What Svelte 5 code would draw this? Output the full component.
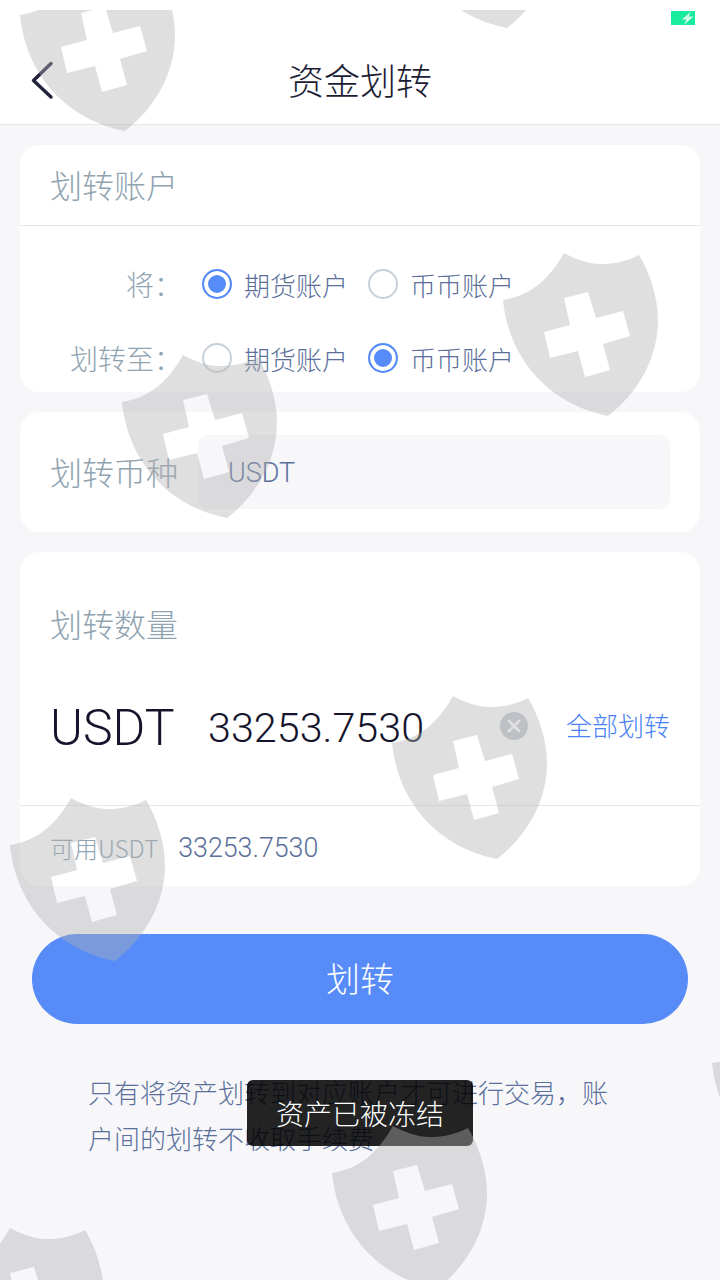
<script>
	const shields = [
		[20, -32],
		[402, -135],
		[503, 253],
		[122, 355],
		[392, 696],
		[10, 798],
		[332, 1126],
		[-51, 1228],
		[712, 1016]
	];
	const shieldPath =
		"M61 0C72 6 85 11 98 11C108 11 120 10 136 2C147 20 155 45 155 67C155 105 135 140 105 163C40 150 5 100 0 47C28 43 47 25 61 0Z" +
		"M61 45L85 39L93 65L120 58L127 83L100 91L107 117L82 124L75 98L47 105L41 79L67 72Z";
</script>

<div class="page">
	<div class="status">
		<svg class="battery" width="24" height="14" viewBox="0 0 24 14">
			<rect width="24" height="14" fill="#19ec9f" />
			<path d="M20 0.5L11 8.5H15.5L13 14L22.5 5.5H17.5Z" fill="#d4fbec" />
		</svg>
	</div>
	<header>
		<svg class="back" width="24" height="40" viewBox="0 0 24 40">
			<path d="M21 2.5L3.5 19.5L21 36" fill="none" stroke="#22223a" stroke-width="3.4" stroke-linecap="round" stroke-linejoin="round" />
		</svg>
		<h1>资金划转</h1>
	</header>

	<main>
		<section class="card accounts">
			<div class="card-title">划转账户</div>
			<div class="radio-rows">
				<div class="radio-row">
					<span class="radio-label">将：</span>
					<span class="radio on"></span>
					<span class="option first">期货账户</span>
					<span class="radio"></span>
					<span class="option">币币账户</span>
				</div>
				<div class="radio-row">
					<span class="radio-label">划转至：</span>
					<span class="radio"></span>
					<span class="option first">期货账户</span>
					<span class="radio on"></span>
					<span class="option">币币账户</span>
				</div>
			</div>
		</section>

		<section class="card coin">
			<span class="coin-label">划转币种</span>
			<div class="coin-input">USDT</div>
		</section>

		<section class="card amount">
			<div class="amount-title">划转数量</div>
			<div class="amount-row">
				<span class="unit">USDT</span>
				<span class="value">33253.7530</span>
				<svg class="clear" width="28" height="28" viewBox="0 0 28 28">
					<circle cx="14" cy="14" r="14" fill="#c5ccd3" />
					<path d="M9 9L19 19M19 9L9 19" stroke="#fff" stroke-width="3" stroke-linecap="round" />
				</svg>
				<span class="all">全部划转</span>
			</div>
			<div class="avail">
				<span class="avail-label">可用USDT</span>
				<span class="avail-value">33253.7530</span>
			</div>
		</section>

		<button>划转</button>

		<p class="note">只有将资产划转到对应账户才可进行交易，账户间的划转不收取手续费</p>
	</main>

	<div class="toast">资产已被冻结</div>

	<div class="watermarks">
		{#each shields as [x, y]}
			<svg class="shield" width="156" height="164" viewBox="0 0 156 164" style="left:{x}px;top:{y - 10}px">
				<path d={shieldPath} fill-rule="evenodd" />
			</svg>
		{/each}
	</div>
</div>

<style>
	:global(body) {
		margin: 0;
		background: #f7f7fa;
	}
	.page {
		position: relative;
		width: 720px;
		height: 1280px;
		overflow: hidden;
		background: #f7f7fa;
		font-family: "Noto Sans CJK SC", "Noto Sans", sans-serif;
		font-weight: 300;
	}
	.status {
		height: 36px;
		background: #fff;
		display: flex;
		justify-content: flex-end;
		align-items: flex-start;
		padding: 11px 25px 0 0;
		box-sizing: border-box;
	}
	.battery {
		display: block;
	}
	header {
		height: 89px;
		background: #fff;
		border-bottom: 1px solid #e6e7e9;
		box-sizing: border-box;
		display: flex;
		align-items: center;
		justify-content: center;
		position: relative;
	}
	.back {
		position: absolute;
		left: 30px;
		top: 25px;
	}
	h1 {
		margin: 0 0 3px;
		font-size: 36px;
		font-weight: 300;
		color: #1c1c34;
		line-height: 48px;
	}
	main {
		padding: 20px 20px 0;
		display: flex;
		flex-direction: column;
	}
	.card {
		background: #fff;
		border-radius: 20px;
	}
	.accounts {
		height: 247px;
		margin-bottom: 20px;
		overflow: hidden;
	}
	.card-title {
		height: 81px;
		box-sizing: border-box;
		border-bottom: 1px solid #e6e7e9;
		padding-left: 30px;
		font-size: 32px;
		line-height: 78px;
		color: #8fa3b1;
	}
	.radio-rows {
		padding-top: 21px;
	}
	.radio-row {
		height: 74px;
		display: flex;
		align-items: center;
	}
	.radio-label {
		width: 162px;
		margin-right: 20px;
		text-align: right;
		font-size: 28px;
		color: #8fa3b1;
		white-space: nowrap;
	}
	.radio {
		width: 30px;
		height: 30px;
		box-sizing: border-box;
		border: 2px solid #c7d0d8;
		border-radius: 50%;
		flex: none;
	}
	.radio.on {
		border-color: #568bf8;
		background: #568bf8;
		box-shadow: inset 0 0 0 4px #fff;
	}
	.option {
		margin-left: 12px;
		font-size: 26px;
		color: #5a6f9a;
		white-space: nowrap;
	}
	.option.first {
		width: 112px;
		margin-right: 12px;
	}
	.coin {
		height: 120px;
		margin-bottom: 20px;
		display: flex;
		align-items: center;
		padding: 0 30px;
	}
	.coin-label {
		font-size: 32px;
		color: #8fa3b1;
		width: 148px;
		white-space: nowrap;
		margin-bottom: 2px;
	}
	.coin-input {
		flex: 1;
		height: 74px;
		border-radius: 10px;
		background: #f7f7fa;
		padding-left: 30px;
		font-size: 27px;
		line-height: 76px;
		color: #5a6f9a;
		font-family: Roboto, "Noto Sans", sans-serif;
	}
	.amount {
		height: 334px;
		display: flex;
		flex-direction: column;
	}
	.amount-title {
		box-sizing: border-box;
		height: 92px;
		padding: 48px 0 0 30px;
		font-size: 32px;
		line-height: 46px;
		color: #8fa3b1;
	}
	.amount-row {
		height: 162px;
		box-sizing: border-box;
		border-bottom: 1px solid #e6e7e9;
		display: flex;
		align-items: center;
		padding: 6px 30px 0;
		position: relative;
	}
	.unit {
		width: 158px;
		font-family: Roboto, sans-serif;
		font-size: 50px;
		color: #14142c;
	}
	.value {
		font-family: Roboto, sans-serif;
		font-size: 41.3px;
		color: #14142c;
	}
	.clear {
		position: absolute;
		left: 480px;
		top: 68px;
	}
	.all {
		margin-left: auto;
		font-size: 26px;
		color: #4a82f7;
		margin-bottom: 6px;
	}
	.avail {
		flex: 1;
		display: flex;
		align-items: center;
		padding: 3px 0 0 30px;
		gap: 20px;
	}
	.avail-label {
		font-size: 24px;
		color: #8fa3b1;
	}
	.avail-value {
		font-family: Roboto, sans-serif;
		font-size: 26.8px;
		color: #5a6f9a;
	}
	button {
		margin: 48px 12px 0;
		height: 90px;
		border: none;
		border-radius: 45px;
		background: #568bf8;
		color: #fff;
		font: inherit;
		font-size: 34px;
		padding: 0 0 4px;
	}
	.note {
		margin: 45px 72px 0 68px;
		font-size: 26px;
		line-height: 46px;
		color: #5a6f9a;
	}
	.toast {
		position: absolute;
		left: 247px;
		top: 1080px;
		width: 226px;
		height: 66px;
		border-radius: 6px;
		background: rgba(0, 0, 0, 0.86);
		color: #fff;
		font-size: 28px;
		line-height: 66px;
		text-align: center;
	}
	.watermarks {
		position: absolute;
		left: 0;
		top: 10px;
		right: 0;
		bottom: 0;
		overflow: hidden;
		pointer-events: none;
	}
	.shield {
		position: absolute;
	}
	.shield path {
		fill: rgba(177, 177, 177, 0.41);
	}
</style>
